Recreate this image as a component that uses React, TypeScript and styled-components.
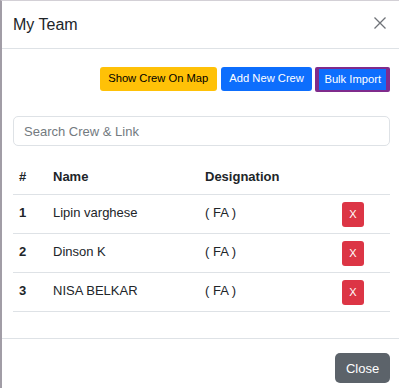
import React, { ReactElement } from 'react';
import styled, { createGlobalStyle } from 'styled-components';

const GlobalStyle = createGlobalStyle`
  html, body {
    margin: 0;
    padding: 0;
    background: #ffffff;
  }
  body {
    font-family: 'Liberation Sans', Arial, sans-serif;
    color: #212529;
  }
`;

const Modal = styled.div`
  height: 388px;
  box-sizing: border-box;
  border-top: 1px solid #d3d0d6;
  border-left: 2px solid #a19da6;
  display: flex;
  flex-direction: column;
  overflow: hidden;
  background: #fff;
`;

const Header = styled.div`
  height: 47px;
  flex-shrink: 0;
  border-bottom: 1px solid #dee2e6;
  padding: 0 12px 0 11px;
  display: flex;
  align-items: center;
  justify-content: space-between;
`;

const Title = styled.h5`
  margin: 0;
  font-size: 16px;
  font-weight: 400;
  line-height: 1.2;
`;

const CloseIcon = styled.button`
  width: 14px;
  height: 14px;
  padding: 0;
  border: 0;
  background: transparent;
  display: flex;
  align-items: center;
  justify-content: center;
  margin-top: -3px;
`;

const Body = styled.div`
  flex: 1;
  padding: 18px 9px 0 11px;
`;

const Toolbar = styled.div`
  display: flex;
  justify-content: flex-end;
  gap: 4px;
  height: 25px;
`;

const ActionButton = styled.button<{ $bg: string; $fg: string }>`
  font-family: inherit;
  font-size: 11.2px;
  line-height: 1;
  padding: 0 8.5px;
  height: 24px;
  border: 0;
  border-radius: 3px;
  background: ${(p) => p.$bg};
  color: ${(p) => p.$fg};
`;

const ImportButton = styled.button`
  font-family: inherit;
  font-size: 11.2px;
  line-height: 1;
  height: 25px;
  padding: 0 5px;
  margin-left: -1px;
  border-style: solid;
  border-color: #7f2b8c;
  border-width: 2px 4.5px;
  border-radius: 2px;
  background: #0d6efd;
  color: #fff;
`;

const Search = styled.input`
  display: block;
  box-sizing: border-box;
  width: 100%;
  height: 30px;
  margin-top: 24px;
  padding: 0 10px;
  border: 1px solid #dee2e6;
  border-radius: 5px;
  font-family: inherit;
  font-size: 13px;
  color: #212529;
  outline: none;
  &::placeholder {
    color: #737a80;
  }
`;

const Table = styled.div`
  margin-top: 16px;
`;

const Row = styled.div<{ $head?: boolean }>`
  display: grid;
  grid-template-columns: 34px 152px 137px 1fr;
  align-items: center;
  height: ${(p) => (p.$head ? '32px' : '38px')};
  border-bottom: 1px solid #dee2e6;
  font-size: 13px;
  font-weight: ${(p) => (p.$head ? 700 : 400)};
`;

const Cell = styled.div<{ $bold?: boolean }>`
  padding: 0 0 3px 6px;
  font-weight: ${(p) => (p.$bold ? 700 : 'inherit')};
`;

const RemoveButton = styled.button`
  margin-left: 6px;
  width: 22px;
  height: 25px;
  padding: 0;
  border: 0;
  border-radius: 3px;
  background: #dc3545;
  color: #fff;
  font-family: inherit;
  font-size: 11px;
`;

const Footer = styled.div`
  flex-shrink: 0;
  height: 35px;
  border-top: 1px solid #dee2e6;
  padding: 14px 9px 0 0;
  display: flex;
  justify-content: flex-end;
  align-items: flex-start;
`;

const CloseButton = styled.button`
  width: 55px;
  height: 30px;
  border: 0;
  border-radius: 5px;
  background: #5c636a;
  color: #fff;
  font-family: inherit;
  font-size: 13px;
`;

const crew = [
  { id: 1, name: 'Lipin varghese', designation: 'FA' },
  { id: 2, name: 'Dinson K', designation: 'FA' },
  { id: 3, name: 'NISA BELKAR', designation: 'FA' },
];

const App = (): ReactElement => {
  return (
    <>
      <GlobalStyle />
      <Modal>
        <Header>
          <Title>My Team</Title>
          <CloseIcon aria-label="Close">
            <svg width="12" height="12" viewBox="0 0 12 12">
              <path d="M0.5 0.5 L11.5 11.5 M11.5 0.5 L0.5 11.5" stroke="#6f7378" strokeWidth="1.3" fill="none" />
            </svg>
          </CloseIcon>
        </Header>
        <Body>
          <Toolbar>
            <ActionButton $bg="#ffc107" $fg="#000">Show Crew On Map</ActionButton>
            <ActionButton $bg="#0d6efd" $fg="#fff">Add New Crew</ActionButton>
            <ImportButton>Bulk Import</ImportButton>
          </Toolbar>
          <Search placeholder="Search Crew &amp; Link" />
          <Table>
            <Row $head>
              <Cell>#</Cell>
              <Cell>Name</Cell>
              <Cell>Designation</Cell>
              <Cell />
            </Row>
            {crew.map((c) => (
              <Row key={c.id}>
                <Cell $bold>{c.id}</Cell>
                <Cell>{c.name}</Cell>
                <Cell>( {c.designation} )</Cell>
                <div>
                  <RemoveButton>X</RemoveButton>
                </div>
              </Row>
            ))}
          </Table>
        </Body>
        <Footer>
          <CloseButton>Close</CloseButton>
        </Footer>
      </Modal>
    </>
  );
};

export default App;
